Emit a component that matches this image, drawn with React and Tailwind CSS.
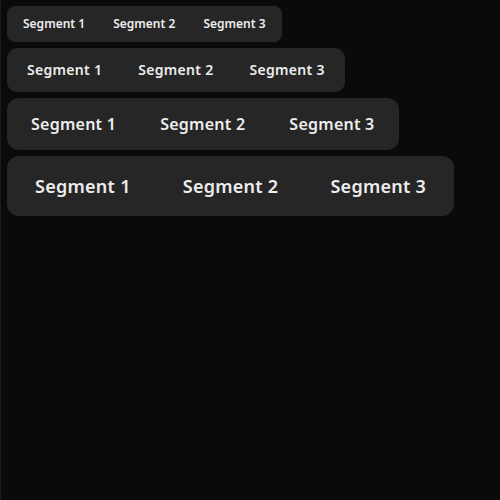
const labels = ["Segment 1", "Segment 2", "Segment 3"];

function Bar({ barClass, segClass }) {
  return (
    <div className={`flex w-fit gap-1 bg-[#262626] p-1 ${barClass}`}>
      {labels.map((l) => (
        <button
          key={l}
          className={`font-semibold text-[#ededed] whitespace-nowrap ${segClass}`}
        >
          {l}
        </button>
      ))}
    </div>
  );
}

export default function App() {
  return (
    <div className="min-h-[500px] bg-[#0a0a0a] border-l border-[#1c1c1c] p-1.5 flex flex-col items-start gap-1.5 font-['Noto_Sans',sans-serif]">
      <Bar barClass="rounded-lg" segClass="px-3 py-1.5 text-xs" />
      <Bar barClass="rounded-[10px]" segClass="px-4 py-2 text-sm tracking-[0.3px]" />
      <Bar barClass="rounded-xl" segClass="px-5 py-2.5 text-base tracking-[0.25px]" />
      <Bar barClass="rounded-xl" segClass="px-6 py-3 text-lg tracking-[0.27px]" />
    </div>
  );
}
